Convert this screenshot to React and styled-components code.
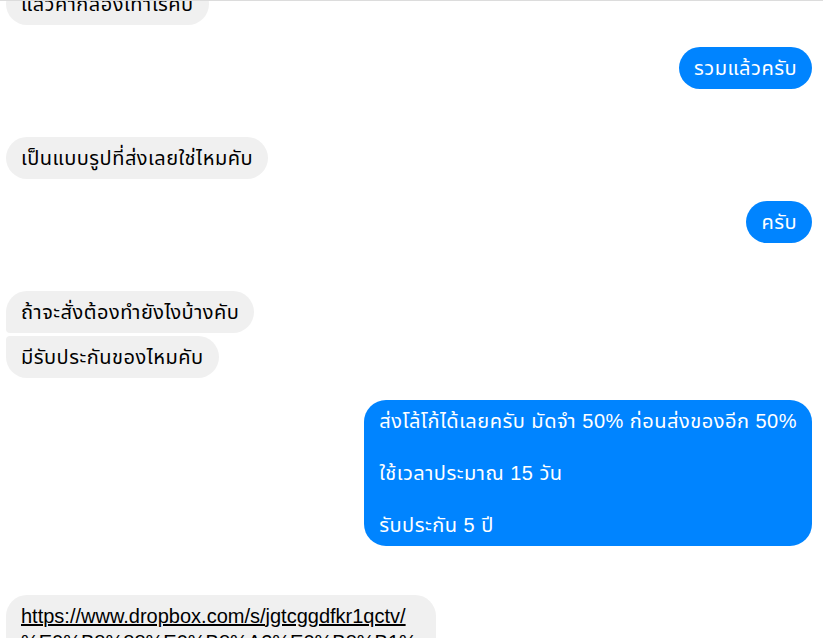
import React from "react";
import styled, { createGlobalStyle, css } from "styled-components";

const Global = createGlobalStyle`
  html, body { margin: 0; padding: 0; background: #ffffff; }
  body { font-family: "Liberation Sans", "Noto Sans Thai", Arial, sans-serif; }
`;

const Viewport = styled.div`
  width: 823px;
  height: 638px;
  overflow: hidden;
  border-top: 1px solid #dcdcdc;
  box-sizing: border-box;
  background: #fff;
`;

const Thread = styled.div`
  display: flex;
  flex-direction: column;
  padding: 0 11px 0 6px;
  margin-top: -18px;
`;

const Row = styled.div`
  display: flex;
  justify-content: ${(p) => (p.$out ? "flex-end" : "flex-start")};
  margin-top: ${(p) => p.$gap || 0}px;
`;

const Bubble = styled.div`
  box-sizing: border-box;
  max-width: 430px;
  padding: 8px 15px;
  font-family: "Liberation Sans", "Noto Sans Thai", Arial, sans-serif;
  font-size: 20px;
  line-height: 26px;
  letter-spacing: ${(p) => (p.$link ? "0" : "0.5px")};
  border-radius: 21px;
  white-space: pre-wrap;
  overflow-wrap: anywhere;
  background: ${(p) => (p.$out ? "#0084ff" : "#f0f0f0")};
  color: ${(p) => (p.$out ? "#ffffff" : "#000000")};
  ${(p) =>
    p.$pos === "first" &&
    css`
      border-bottom-left-radius: 4px;
    `}
  ${(p) =>
    p.$pos === "last" &&
    css`
      border-top-left-radius: 4px;
    `}
  ${(p) =>
    p.$wide &&
    css`
      max-width: 480px;
      border-radius: 22px;
    `}
`;

const Link = styled.a`
  color: inherit;
  text-decoration: underline;
`;

export default function App() {
  return (
    <>
      <Global />
      <Viewport>
        <Thread>
          <Row>
            <Bubble>แล้วค่ากล่องเท่าไรคับ</Bubble>
          </Row>
          <Row $out $gap={22}>
            <Bubble $out>รวมแล้วครับ</Bubble>
          </Row>
          <Row $gap={48}>
            <Bubble>เป็นแบบรูปที่ส่งเลยใช่ไหมคับ</Bubble>
          </Row>
          <Row $out $gap={22}>
            <Bubble $out>ครับ</Bubble>
          </Row>
          <Row $gap={48}>
            <Bubble $pos="first">ถ้าจะสั่งต้องทำยังไงบ้างคับ</Bubble>
          </Row>
          <Row $gap={3}>
            <Bubble $pos="last">มีรับประกันของไหมคับ</Bubble>
          </Row>
          <Row $out $gap={22}>
            <Bubble $out $wide>
              {"ส่งโล้โก้ได้เลยครับ มัดจำ 50% ก่อนส่งของอีก 50%\n\nใช้เวลาประมาณ 15 วัน\n\nรับประกัน 5 ปี"}
            </Bubble>
          </Row>
          <Row $gap={49}>
            <Bubble $link>
              <Link href="#">
                https://www.dropbox.com/s/jgtcggdfkr1qctv/<wbr />%E0%B8%88%E0%B8%A2%E0%B8%B1%E0%B8%99%E0%B8%AD%E0%B8%A2%E0%B8%94%E0%B8%B5.jpg?dl=0
              </Link>
            </Bubble>
          </Row>
        </Thread>
      </Viewport>
    </>
  );
}
